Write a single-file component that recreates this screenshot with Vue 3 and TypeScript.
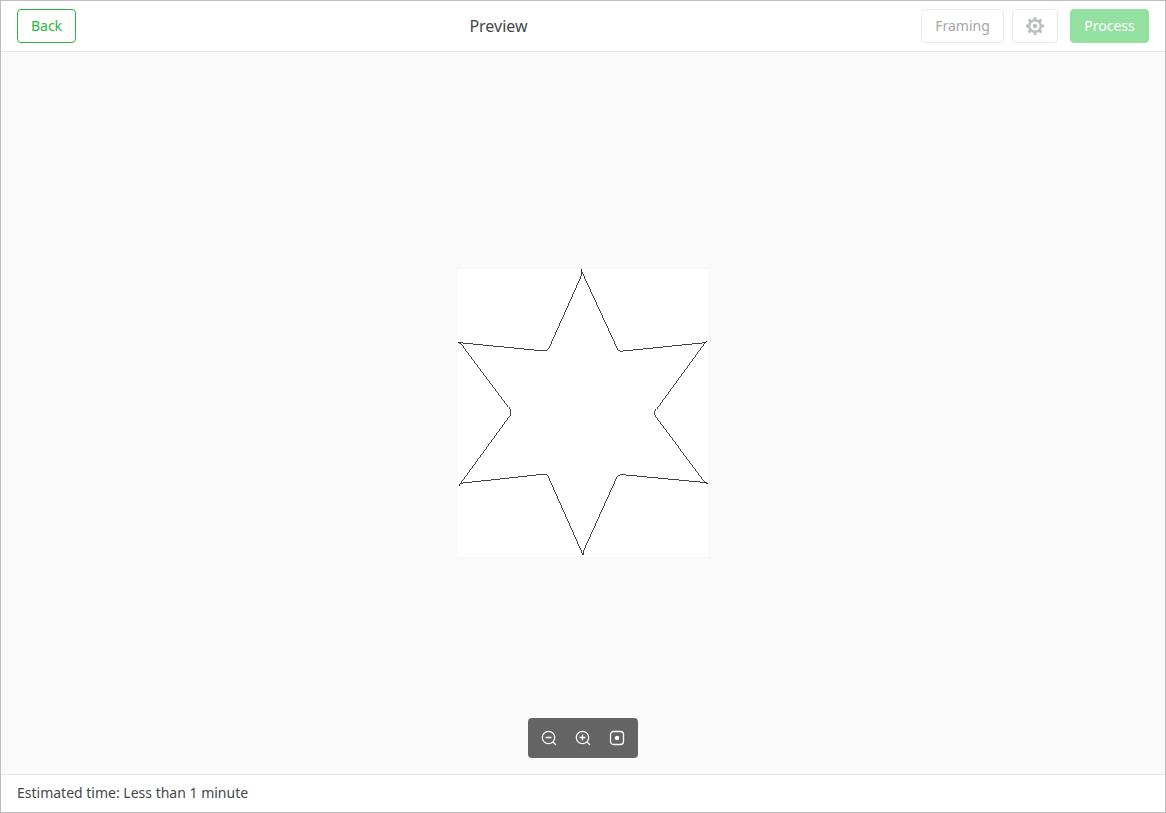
<script setup lang="ts">
import { ref } from 'vue'

const title = 'Preview'
const estimate = ref('Less than 1 minute')
const zoom = ref(1)

function zoomBy(factor: number): void {
  zoom.value = Math.min(4, Math.max(0.25, zoom.value * factor))
}

function resetZoom(): void {
  zoom.value = 1
}
</script>

<template>
  <div class="window">
    <header class="topbar">
      <button type="button" class="btn back">Back</button>
      <h1 class="title">{{ title }}</h1>
      <div class="actions">
        <button type="button" class="btn framing" disabled>Framing</button>
        <button type="button" class="btn settings" aria-label="Settings" disabled>
          <svg width="18" height="18" viewBox="0 0 18 18" fill="none" stroke="currentColor">
            <circle cx="9" cy="9" r="5.8" stroke-width="2.4" />
            <circle cx="9" cy="9" r="2.3" fill="currentColor" stroke="none" />
            <path
              d="M9 0V3M9 15V18M0 9H3M15 9H18M2.600 2.600L4.600 4.600M13.400 13.400L15.400 15.400M2.600 15.400L4.600 13.400M13.400 4.600L15.400 2.600"
              stroke-width="2.8"
            />
          </svg>
        </button>
        <button type="button" class="btn process" disabled>Process</button>
      </div>
    </header>

    <main class="stage">
      <svg class="artboard" :width="252 * zoom" :height="288 * zoom" viewBox="0 0 252 288">
        <path
          d="M124.5 0V5Q124 8 122 12L92 79Q90.500 82 87 82L6 74L1 73.500Q4 74 6 76.500L52 138Q54 141 54 143Q54 146 52 148L2 216.500Q3 214.500 6 214L84 205.500H88Q90 205.500 91 207L126 286V283L160 208Q161 205.500 164 205.500L248 213.500L251 214.500Q248 214.500 246 211L199 148Q197.500 146 197.500 144Q197.500 142 199 140L249 71.500Q248 73.500 245 74L166 82H163Q161 82 160 79L125 3Z"
        />
      </svg>
      <div class="toolbar" role="toolbar" aria-label="Zoom">
        <button type="button" class="tool" aria-label="Zoom out" @click="zoomBy(0.8)">
          <svg width="16" height="16" viewBox="0 0 16 16">
            <circle cx="7.500" cy="7.500" r="6.200" />
            <path d="M12 12L15 15M4.500 7.500H10.500" />
          </svg>
        </button>
        <button type="button" class="tool" aria-label="Zoom in" @click="zoomBy(1.25)">
          <svg width="16" height="16" viewBox="0 0 16 16">
            <circle cx="7.500" cy="7.500" r="6.200" />
            <path d="M12 12L15 15M4.500 7.500H10.500M7.500 4.500V10.500" />
          </svg>
        </button>
        <button type="button" class="tool" aria-label="Fit to view" @click="resetZoom">
          <svg width="16" height="16" viewBox="0 0 16 16">
            <rect x="1.500" y="1.500" width="13" height="13" rx="3" />
            <circle class="dot" cx="8" cy="8" r="2.200" />
          </svg>
        </button>
      </div>
    </main>

    <footer class="status">Estimated time: {{ estimate }}</footer>
  </div>
</template>

<style>
body {
  margin: 0;
}
</style>

<style scoped>
.window {
  box-sizing: border-box;
  display: flex;
  flex-direction: column;
  height: 100vh;
  border: 1px solid #bdbdbd;
  background: #fff;
  color: #444749;
  font-family: "Noto Sans", "Open Sans", sans-serif;
  font-size: 14px;
}
.topbar {
  display: flex;
  align-items: center;
  justify-content: space-between;
  height: 50px;
  padding: 0 16px;
  border-bottom: 1px solid #e6e6e6;
}
.actions {
  display: flex;
  gap: 8px;
}
.title {
  margin: 0;
  font-size: 16px;
  font-weight: 400;
  line-height: 24px;
}
.btn {
  box-sizing: border-box;
  display: flex;
  align-items: center;
  justify-content: center;
  height: 34px;
  padding: 0 13px;
  border: 1px solid #e9e9e9;
  border-radius: 4px;
  background: #fff;
  font: inherit;
  line-height: 20px;
}
.back {
  width: 59px;
  border-color: #28b840;
  color: #28b840;
}
.framing {
  width: 83px;
  color: #a5a7a8;
}
.settings {
  width: 46px;
  color: #bbbebe;
}
.process {
  width: 79px;
  margin-left: 4px;
  border-color: #94e0a0;
  background: #94e0a0;
  color: #fff;
}
.stage {
  position: relative;
  flex: 1;
  min-height: 0;
  display: flex;
  align-items: center;
  justify-content: center;
  overflow: hidden;
  background: #fafafa;
}
.artboard {
  flex: none;
  background: #fff;
  outline: 1px solid #f7f7f7;
  fill: none;
  stroke: #111;
  stroke-width: 0.8;
  shape-rendering: crispEdges;
}
.toolbar {
  position: absolute;
  bottom: 16px;
  left: 50%;
  transform: translateX(-50%);
  display: flex;
  padding: 3px 4px;
  border-radius: 4px;
  background: #646464;
}
.tool {
  display: grid;
  place-items: center;
  width: 34px;
  height: 34px;
  padding: 0;
  border: 0;
  background: none;
}
.tool svg {
  fill: none;
  stroke: #fff;
  stroke-width: 1.3;
}
.tool .dot {
  fill: #fff;
  stroke: none;
}
.status {
  height: 37px;
  padding: 0 16px;
  border-top: 1px solid #e6e6e6;
  line-height: 36px;
}
</style>
